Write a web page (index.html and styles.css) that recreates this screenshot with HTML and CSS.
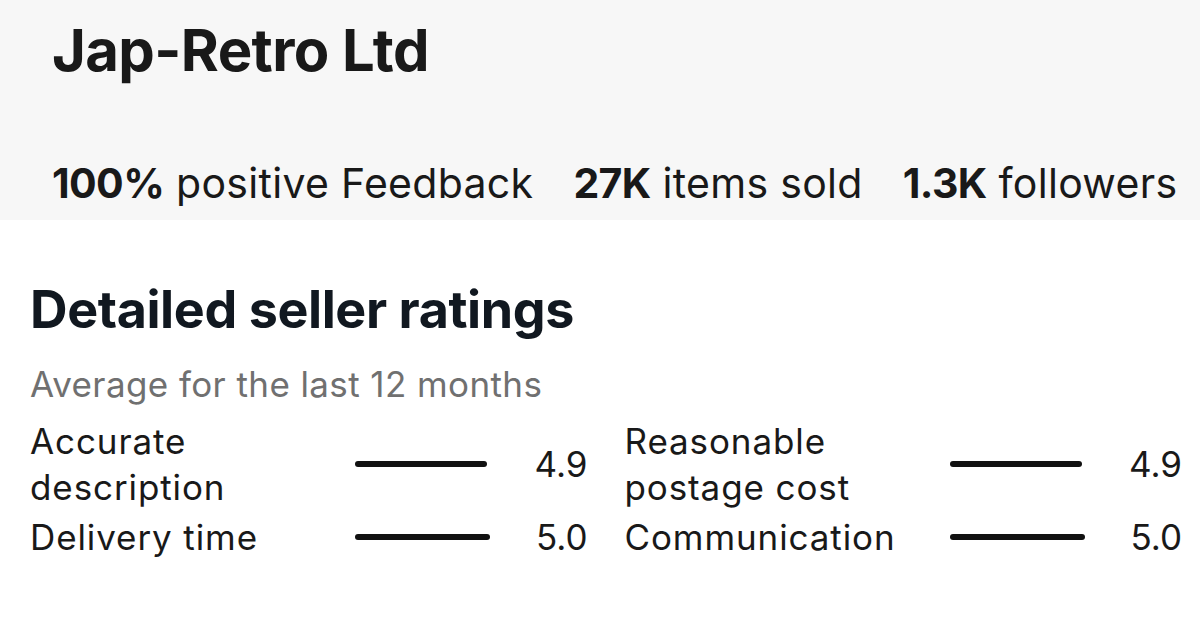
FILE: index.html
```html
<!DOCTYPE html>
<html lang="en">
<head>
  <meta charset="UTF-8">
  <title>Jap-Retro Ltd</title>
  <link rel="stylesheet" href="styles.css">
</head>
<body>
  <header class="seller-header">
    <h1 class="seller-name">Jap-Retro Ltd</h1>
    <ul class="seller-stats">
      <li><strong>100%</strong> positive Feedback</li>
      <li><strong>27K</strong> items sold</li>
      <li><strong>1.3K</strong> followers</li>
    </ul>
  </header>

  <!-- Detailed ratings -->
  <section class="ratings">
    <h2>Detailed seller ratings</h2>
    <p class="ratings-sub">Average for the last 12 months</p>
    <div class="ratings-grid">
      <div class="rating">
        <span class="rating-label">Accurate description</span>
        <span class="rating-bar"><span class="rating-fill" style="width:98%"></span></span>
        <span class="rating-value">4.9</span>
      </div>
      <div class="rating">
        <span class="rating-label">Reasonable postage cost</span>
        <span class="rating-bar"><span class="rating-fill" style="width:98%"></span></span>
        <span class="rating-value">4.9</span>
      </div>
      <div class="rating">
        <span class="rating-label">Delivery time</span>
        <span class="rating-bar"><span class="rating-fill" style="width:100%"></span></span>
        <span class="rating-value">5.0</span>
      </div>
      <div class="rating">
        <span class="rating-label">Communication</span>
        <span class="rating-bar"><span class="rating-fill" style="width:100%"></span></span>
        <span class="rating-value">5.0</span>
      </div>
    </div>
  </section>
</body>
</html>
```

FILE: styles.css
```css
body {
  margin: 0;
  font-family: Inter, "Noto Sans", Arial, sans-serif;
  color: #191919;
  background: #fff;
}
.seller-header {
  background: #f7f7f7;
  height: 220px;
  box-sizing: border-box;
  padding: 12px 0 0 52px;
  overflow: hidden;
}
.seller-name {
  margin: 0;
  font-size: 58px;
  font-weight: 700;
  line-height: 76px;
  letter-spacing: -0.6px;
}
.seller-stats {
  list-style: none;
  margin: 70px 0 0;
  padding: 0;
  display: flex;
  gap: 40px;
  font-size: 41px;
  line-height: 50px;
  letter-spacing: 0.3px;
  white-space: nowrap;
}
.seller-stats li {
  flex-shrink: 0;
}
.seller-stats strong {
  font-weight: 700;
  letter-spacing: -0.6px;
}

.ratings {
  padding: 0 18px 0 30px;
}
.ratings h2 {
  margin: 60px 0 0;
  font-size: 52px;
  line-height: 60px;
  font-weight: 700;
  color: #111820;
  letter-spacing: -0.4px;
}
.ratings-sub {
  margin: 24px 0 0;
  font-size: 35px;
  line-height: 40px;
  color: #707070;
  letter-spacing: 0.4px;
}
.ratings-grid {
  display: grid;
  grid-template-columns: 1fr 1fr;
  column-gap: 37px;
  row-gap: 4px;
  margin-top: 14px;
}
.rating {
  display: grid;
  grid-template-columns: 325px 135px 1fr;
  align-items: center;
  font-size: 35px;
  line-height: 46px;
  letter-spacing: 0.9px;
}
.rating-label {
  padding-right: 25px;
}
.rating-bar {
  display: block;
  height: 6px;
}
.rating-fill {
  display: block;
  height: 100%;
  background: #111;
  border-radius: 3px;
}
.rating-value {
  text-align: right;
  letter-spacing: 0;
}
```
